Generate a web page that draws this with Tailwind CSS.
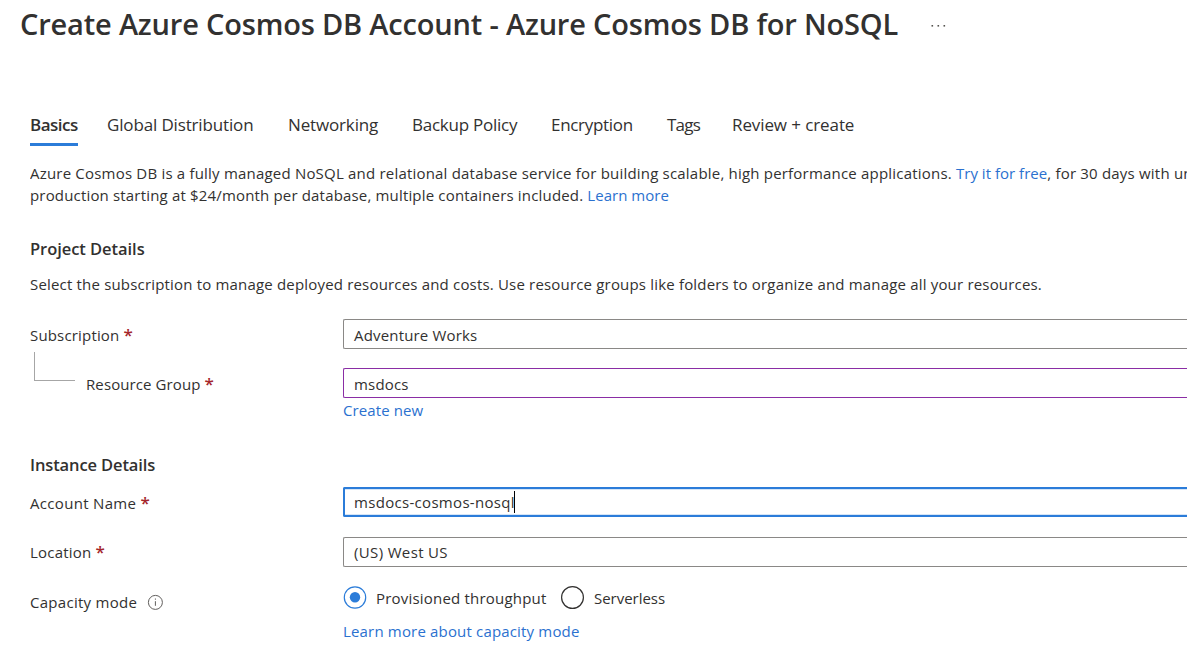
<!DOCTYPE html>
<html lang="en">
<head>
<meta charset="utf-8">
<title>Create Azure Cosmos DB Account</title>
<script src="https://cdn.jsdelivr.net/npm/@tailwindcss/browser@4"></script>
</head>
<body class="bg-white w-[1187px] h-[654px] overflow-hidden font-['Open_Sans','Noto_Sans',sans-serif] text-[15px] leading-[22px] text-[#323130] whitespace-nowrap">

<header class="flex items-center h-12 pl-5">
  <h1 class="text-[29px] leading-[48px] font-semibold tracking-[-0.18px]">Create Azure Cosmos DB Account - Azure Cosmos DB for NoSQL</h1>
  <svg class="ml-[33px] mt-1 w-[15px] h-1" viewBox="0 0 15 4" fill="#55534f"><rect x="0.5" y="1" width="1.6" height="1.6"/><rect x="6.5" y="1" width="1.6" height="1.6"/><rect x="12.5" y="1" width="1.6" height="1.6"/></svg>
</header>

<nav class="flex mt-[60px] ml-[30px] h-[38px] text-[17px] leading-[34px]">
  <div class="w-12 border-b-[3px] border-[#2b7cd9] font-semibold tracking-[-0.5px]">Basics</div>
  <div class="ml-[29px] w-[181px] tracking-[-0.15px]">Global Distribution</div>
  <div class="w-[124px] tracking-[-0.15px]">Networking</div>
  <div class="w-[139px] tracking-[-0.25px]">Backup Policy</div>
  <div class="w-[116px] tracking-[-0.3px]">Encryption</div>
  <div class="w-[65px] tracking-[-0.8px]">Tags</div>
  <div class="tracking-[-0.1px]">Review + create</div>
</nav>

<main class="pl-[30px]">
  <p class="mt-4 tracking-[0.2px] overflow-hidden">Azure Cosmos DB is a fully managed NoSQL and relational database service for building scalable, high performance applications. <a class="text-[#2b71cf] tracking-[0.02px]">Try it for free</a>, for 30 days with un</p>
  <p class="tracking-[0.17px]">production starting at $24/month per database, multiple containers included. <a class="text-[#2b71cf] tracking-[0.02px]">Learn more</a></p>

  <h2 class="mt-[31px] text-[16.5px] leading-[23px] font-semibold tracking-[-0.05px]">Project Details</h2>
  <p class="mt-[13px] tracking-[0.18px]">Select the subscription to manage deployed resources and costs. Use resource groups like folders to organize and manage all your resources.</p>

  <div class="mt-6 flex h-[30px]">
    <div class="w-[313px] pt-[5px] tracking-[0.17px]">Subscription <span class="text-[#a4262c] font-semibold text-[17px] leading-[22px]">*</span></div>
    <div class="flex-1 border border-r-0 border-[#8a8886] rounded-l-[2px] pl-[10px] pt-1 tracking-[0.17px]">Adventure Works</div>
  </div>
  <div class="mt-[3px] flex h-[46px]">
    <div class="w-[313px] flex">
      <div class="ml-1 w-[41px] h-[29px] border-l border-b border-[#a6a6a6]"></div>
      <div class="ml-[11px] pt-[21px] tracking-[0.1px]">Resource Group <span class="text-[#a4262c] font-semibold text-[17px] leading-[22px]">*</span></div>
    </div>
    <div class="mt-4 flex-1 border border-r-0 border-[#8a2da5] rounded-l-[2px] pl-[10px] pt-1 tracking-[0.17px]">msdocs</div>
  </div>
  <a class="block mt-px ml-[313px] text-[#2b71cf] tracking-[0.1px]">Create new</a>

  <h2 class="mt-[32px] text-[16.5px] leading-[23px] font-semibold tracking-[-0.12px]">Instance Details</h2>
  <div class="mt-[11px] flex h-[30px]">
    <div class="w-[313px] pt-[5px] tracking-[0.32px]">Account Name <span class="text-[#a4262c] font-semibold text-[17px] leading-[22px]">*</span></div>
    <div class="flex-1 border-2 border-r-0 border-[#2b7cd9] rounded-l-[2px] pl-[9px] pt-[2px] flex shadow-[inset_0_1px_0_#d5e5f7,inset_0_-1px_0_#d5e5f7]"><span class="tracking-[0.31px]">msdocs-cosmos-nosql</span><span class="-ml-px w-px h-[22px] bg-black"></span></div>
  </div>
  <div class="mt-5 flex h-[30px]">
    <div class="w-[313px] pt-1 tracking-[0.2px]">Location <span class="text-[#a4262c] font-semibold text-[17px] leading-[22px]">*</span></div>
    <div class="flex-1 border border-r-0 border-[#8a8886] rounded-l-[2px] pl-[10px] pt-[3px] tracking-[0.35px]">(US) West US</div>
  </div>

  <div class="mt-[19px] flex">
    <div class="w-[313px] flex pt-[5px]">
      <span class="tracking-[0.28px]">Capacity mode</span>
      <svg class="ml-[10px] mt-[3px] w-4 h-4" viewBox="0 0 16 16" fill="none" stroke="#605e5c"><circle cx="8.4" cy="8.4" r="7"/><path d="M8.4 7.2v4.6M8.4 4.5v1.2"/></svg>
    </div>
    <svg class="w-6 h-6" viewBox="0 0 24 24"><circle cx="12" cy="11.5" r="10.7" fill="none" stroke="#2b7cd9" stroke-width="1.2"/><circle cx="12" cy="11.3" r="5.2" fill="#2b7cd9"/></svg>
    <span class="ml-[9px] mt-px w-[184px] tracking-[0.2px]">Provisioned throughput</span>
    <svg class="w-6 h-6" viewBox="0 0 24 24"><circle cx="12.5" cy="11.5" r="10.9" fill="none" stroke="#323130" stroke-width="1.2"/></svg>
    <span class="ml-[10px] mt-px tracking-[-0.02px]">Serverless</span>
  </div>
  <a class="block mt-[7px] ml-[313px] text-[#2b71cf] tracking-[0.17px]">Learn more about capacity mode</a>
</main>
</body>
</html>
